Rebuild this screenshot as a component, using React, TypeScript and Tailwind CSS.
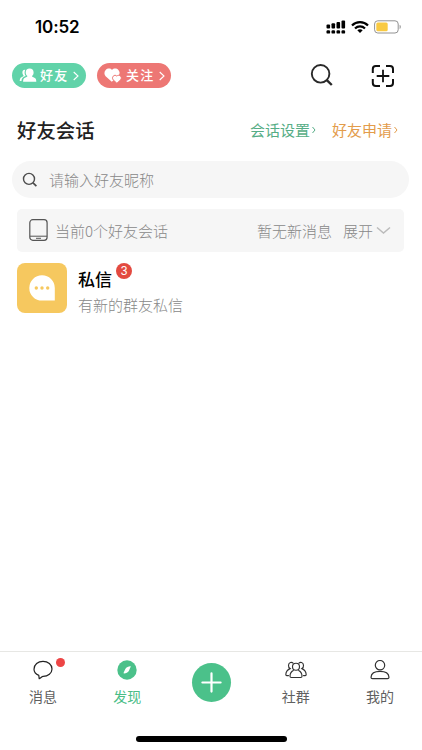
import React from "react";

function StatusBar() {
  return (
    <div className="flex h-[54px] items-center pr-[20px] pl-[35px]">
      <span className="grow font-['Inter','Liberation_Sans',sans-serif] text-[17px] leading-[20px] font-semibold tracking-[-0.1px] text-black">
        10:52
      </span>
      <svg className="mr-[5px]" width="20" height="14" viewBox="0 0 20 14" fill="#000">
        <rect x="0.5" y="4.5" width="3.6" height="4" rx="1" />
        <rect x="5.5" y="3.2" width="3.6" height="5.3" rx="1" />
        <rect x="10.5" y="1.9" width="3.6" height="6.6" rx="1" />
        <rect x="15.5" y="0.4" width="3.6" height="8.1" rx="1" />
        <rect x="0.5" y="10.2" width="3.6" height="3.4" rx="1.2" />
        <rect x="5.5" y="10.2" width="3.6" height="3.4" rx="1.2" />
        <rect x="10.5" y="10.2" width="3.6" height="3.4" rx="1.2" />
        <rect x="15.5" y="10.2" width="3.6" height="3.4" rx="1.2" />
      </svg>
      <svg className="mr-[5px]" width="18" height="14" viewBox="0 0 18 14" fill="none" stroke="#000" strokeWidth="2.2">
        <path d="M1 5.4C5.4 0.9 12.6 0.9 17 5.4" />
        <path d="M4 8.5C6.8 5.7 11.2 5.7 14 8.5" />
        <path d="M6.3 10.3C7.8 9 10.2 9 11.7 10.3L9 13Z" fill="#000" stroke="none" />
      </svg>
      <svg width="28" height="14" viewBox="0 0 28 14">
        <rect x="0.6" y="0.8" width="23.6" height="12.2" rx="3.2" fill="#fff" stroke="#929292" />
        <rect x="2.3" y="2.5" width="11.4" height="8.8" rx="1.5" fill="#f9ca42" />
        <path d="M25.6 4.8c1.6.6 1.6 3.6 0 4.2z" fill="#929292" />
      </svg>
    </div>
  );
}

function PillArrow() {
  return (
    <svg width="6" height="10" viewBox="0 0 6 10" fill="none" stroke="#fff" strokeWidth="1.1">
      <path d="M0.7 1L5 5L0.7 9" />
    </svg>
  );
}

function Header() {
  return (
    <div className="flex h-[43px] items-center pr-[27px] pl-[12px]">
      <div className="flex h-[25px] w-[74px] items-center rounded-full bg-[#61d3a9] pl-[7px] text-white">
        <svg className="shrink-0" width="18" height="15" viewBox="0 0 18 15" fill="#fff">
          <path d="M10.6 0.5c2.5 0 4 1.7 4 3.9 0 1.6-.7 2.9-1.7 3.7.2.9 1.2 1.1 2.5 1.7 1.3.6 1.9 1.7 1.9 3.9H4.1c0-2.2.6-3.3 1.9-3.9 1.3-.6 2.3-.8 2.5-1.7-1-.8-1.8-2.1-1.8-3.7 0-2.2 1.5-3.9 3.9-3.9z" />
          <path d="M6.3 1.7C4 1.5 3 3.2 3.5 5.4c.2 1 .7 1.6 1.1 2-.3 1.2-1.8 1.3-2.7 2.2C1.1 10.4.8 11.6.7 13h1.8c.1-2.3 1-3.9 4.2-4.9-1.4-2-1.4-4.4-.4-6.4z" />
        </svg>
        <span className="ml-[3px] pb-[2px] text-[13px] leading-[22px] font-medium tracking-[1.3px]">好友</span>
        <span className="ml-[4px]"><PillArrow /></span>
      </div>
      <div className="ml-[11px] flex h-[25px] w-[74px] items-center rounded-full bg-[#ed7774] pl-[7px] text-white">
        <svg className="shrink-0" width="18" height="16" viewBox="0 0 18 16">
          <path d="M8 2C6.5.1 3.4.2 1.7 2.1-.1 4.2.1 6.4 1.6 8.2l6.2 5.6 6.5-5.9c1.8-2 1.7-4.2.1-6C12.7.2 9.5.1 8 2z" fill="#fff" />
          <path d="M12.8 8.1c-1-1.2-2.7-1-3.6.1-1.1 1.3-.8 2.8.2 3.9l3.5 3.2 3.5-3.2c1.1-1.2 1.3-2.7.2-3.9-1-1.1-2.8-1.2-3.8-.1z" fill="#fff" stroke="#ed7774" strokeWidth="1" />
        </svg>
        <span className="ml-[4px] pb-[2px] text-[13px] leading-[22px] font-medium tracking-[1.3px]">关注</span>
        <span className="ml-[4px]"><PillArrow /></span>
      </div>
      <div className="grow" />
      <svg className="mr-[37px]" width="24" height="24" viewBox="0 0 24 24" fill="none" stroke="#292929">
        <circle cx="10.6" cy="9.8" r="8.8" strokeWidth="1.9" />
        <path d="M16.8 16.2L21.8 21" strokeWidth="2.4" />
      </svg>
      <svg width="24" height="24" viewBox="0 0 24 24" fill="none" stroke="#111" strokeWidth="2">
        <path d="M1.8 9V5Q1.8 2 4.8 2H9M15 2h4Q22 2 22 5V9M22 15v4Q22 22 19 22H15M9 22H4.8Q1.8 22 1.8 19V15" />
        <path d="M5.7 12H18.3M12 5.7V18.3" strokeWidth="1.8" />
      </svg>
    </div>
  );
}

function LinkArrow() {
  return (
    <svg className="ml-[2px]" width="4" height="8" viewBox="0 0 4 8" fill="none" stroke="currentColor">
      <path d="M0.5 1L3 4L0.5 7" />
    </svg>
  );
}

function TitleRow() {
  return (
    <div className="flex h-[64px] items-center pt-[2px] pr-[24px] pl-[17px]">
      <h1 className="grow text-[19.4px] leading-[28px] font-medium text-[#222]">好友会话</h1>
      <a className="flex items-center text-[15px] leading-[22px] text-[#56ad86]">会话设置<LinkArrow /></a>
      <a className="ml-[16px] flex items-center text-[15px] leading-[22px] text-[#e39c4b]">好友申请<LinkArrow /></a>
    </div>
  );
}

function SearchBox() {
  return (
    <div className="mr-[13px] ml-[12px] flex h-[37px] items-center rounded-full bg-[#f6f6f6] pl-[10px]">
      <svg width="16" height="16" viewBox="0 0 16 16" fill="none" stroke="#4c4c4c" strokeWidth="1.4">
        <circle cx="7" cy="6.9" r="5.5" />
        <path d="M11 10.9L14.4 14.1" strokeWidth="1.7" />
      </svg>
      <span className="ml-[11px] text-[15px] leading-[22px] font-light text-[#888]">请输入好友昵称</span>
    </div>
  );
}

function SessionBar() {
  return (
    <div className="mt-[11px] mr-[18px] ml-[17px] flex h-[43px] items-center rounded-[5px] bg-[#f6f6f6] pr-[13px] pl-[12px] text-[15px] leading-[22px] font-light text-[#888]">
      <svg width="20" height="23" viewBox="0 0 20 23" fill="none" stroke="#555">
        <rect x="0.8" y="0.7" width="17.3" height="20.6" rx="3" strokeWidth="1.2" />
        <path d="M1 17.2H18M7 19.3H12" />
      </svg>
      <span className="ml-[6px] grow">当前0个好友会话</span>
      <span>暂无新消息</span>
      <span className="ml-[11px]">展开</span>
      <svg className="ml-[3px]" width="15" height="9" viewBox="0 0 15 9" fill="none" stroke="#bbb" strokeWidth="1.5">
        <path d="M1 1.5L7.5 7L14 1.5" />
      </svg>
    </div>
  );
}

function MessageItem() {
  return (
    <div className="mt-[11px] flex pl-[17px]">
      <div className="flex h-[50px] w-[50px] items-center justify-center rounded-[8px] bg-[#f6c85f]">
        <svg width="28" height="28" viewBox="0 0 28 28">
          <path d="M14 1.2a12.7 12.7 0 1 0 0 25.4H26.8V13.9A12.7 12.7 0 0 0 14 1.2z" fill="#fff" />
          <g fill="#f6c85f">
            <circle cx="8.3" cy="14" r="1.7" />
            <circle cx="14" cy="14" r="1.7" />
            <circle cx="19.7" cy="14" r="1.7" />
          </g>
        </svg>
      </div>
      <div className="ml-[11px]">
        <div className="flex h-[31px] items-start">
          <span className="pt-[3px] text-[17px] leading-[25px] font-medium text-black">私信</span>
          <span className="ml-[4px] h-[16px] w-[16px] rounded-full bg-[#e34a40] text-center font-['Liberation_Sans',sans-serif] text-[12px] leading-[17px] text-white">3</span>
        </div>
        <p className="text-[15px] leading-[22px] font-light text-[#888]">有新的群友私信</p>
      </div>
    </div>
  );
}

function NavItem({ label, active, children }: { label: string; active?: boolean; children: React.ReactNode }) {
  return (
    <div className="flex flex-1 flex-col items-center pt-[6px]">
      <div className="flex h-[24px] items-center justify-center">{children}</div>
      <span className={active ? "mt-[4px] text-[14px] leading-[20px] text-[#4abd86]" : "mt-[4px] text-[14px] leading-[20px] text-[#606060]"}>
        {label}
      </span>
    </div>
  );
}

function BottomNav() {
  return (
    <nav className="flex h-[99px] shrink-0 flex-col border-t border-[#e7e7e4]">
      <div className="flex h-[85px] pl-[1px]">
        <NavItem label="消息">
          <div className="relative">
            <svg width="20" height="20" viewBox="0 0 20 20" fill="none" stroke="#222" strokeWidth="1.2">
              <path d="M5.8 15.4C2.8 14.2 1 12 1 9.2 1 4.7 5 1.3 10 1.3s9 3.4 9 7.6-4 7.5-8.9 7.5c-1.3 0-2 1.3-3.9 2.3z" strokeLinejoin="round" />
            </svg>
            <span className="absolute top-[-2px] left-[23px] h-[9px] w-[9px] rounded-full bg-[#ed4545]" />
          </div>
        </NavItem>
        <NavItem label="发现" active>
          <svg width="20" height="20" viewBox="0 0 20 20">
            <circle cx="10" cy="10" r="9.7" fill="#4bc18a" />
            <path d="M13.8 6.4C12.6 5.9 9.4 7.2 8.3 8.9L6.4 13.3C8 13.8 10.8 12.7 11.8 10.9Z" fill="#fff" />
          </svg>
        </NavItem>
        <div className="flex flex-1 justify-center pt-[11px]">
          <div className="flex h-[39px] w-[39px] items-center justify-center rounded-full bg-[#4bc18a]">
            <svg width="21" height="21" viewBox="0 0 21 21" stroke="#fff" strokeWidth="2.2" strokeLinecap="round">
              <path d="M1.4 10.5H19.6M10.5 1.4V19.6" />
            </svg>
          </div>
        </div>
        <NavItem label="社群">
          <svg width="22" height="18" viewBox="0 0 22 18" fill="none" stroke="#333" strokeWidth="1.15" strokeLinecap="round">
            <circle cx="11" cy="5.7" r="3.5" />
            <path d="M8.3 9.4C6 10.6 5 12.7 5 15.3Q5 16.5 6.2 16.5H15.8Q17 16.5 17 15.3C17 12.7 16 10.6 13.7 9.4" />
            <path d="M8.1 2.1C6.8.8 3.7 1.2 3.5 4.2c-.1 1.6.5 2.7 1.6 3.4C2.4 8.7 1 11 .8 13.5q0 1 1 1.1H3.5M13.9 2.1c1.3-1.3 4.4-.9 4.6 2.1.1 1.6-.5 2.7-1.6 3.4 2.7 1.1 4.1 3.4 4.3 5.9q0 1-1 1.1H18.5" />
          </svg>
        </NavItem>
        <NavItem label="我的">
          <svg width="20" height="20" viewBox="0 0 20 20" fill="none" stroke="#333" strokeWidth="1.2">
            <circle cx="10" cy="5.2" r="4.7" />
            <path d="M2.5 18.6Q1 18.6 1 17.2C1.3 13.1 4.3 11.4 10 11.4S18.7 13.1 19 17.2Q19 18.6 17.5 18.6Z" />
          </svg>
        </NavItem>
      </div>
      <div className="-mt-[1px] ml-[136px] h-[6px] w-[151px] rounded-full bg-black" />
    </nav>
  );
}

export default function App() {
  return (
    <div className="flex h-[750px] w-[422px] flex-col overflow-hidden bg-white font-['Noto_Sans_CJK_SC',sans-serif]">
      <StatusBar />
      <Header />
      <TitleRow />
      <SearchBox />
      <SessionBar />
      <MessageItem />
      <div className="grow" />
      <BottomNav />
    </div>
  );
}
